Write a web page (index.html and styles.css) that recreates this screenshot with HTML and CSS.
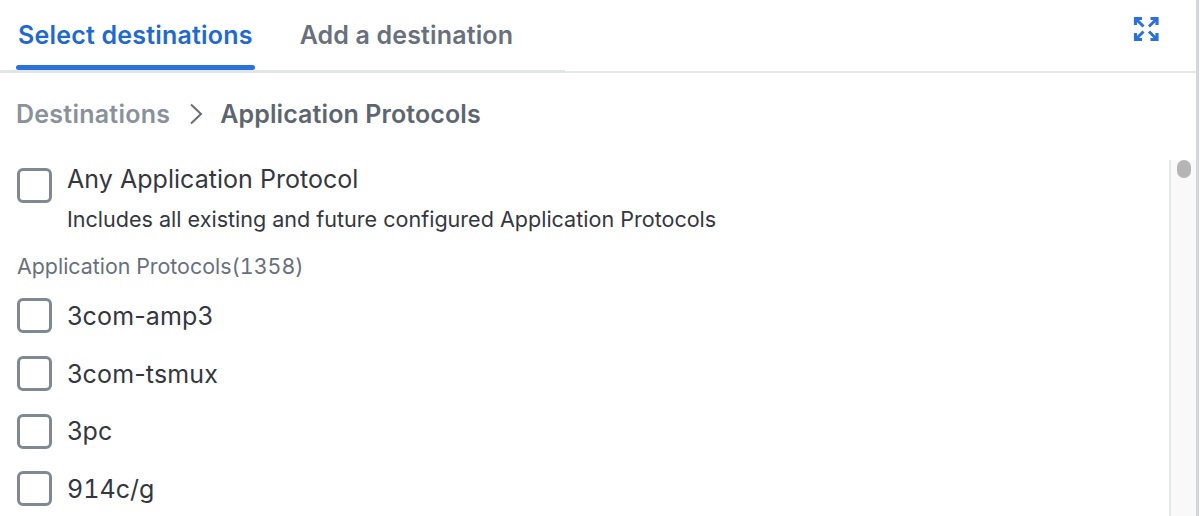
FILE: index.html
```html
<!DOCTYPE html>
<html lang="en">
<head>
<meta charset="utf-8">
<title>Select destinations</title>
<link rel="stylesheet" href="styles.css">
</head>
<body>
<div class="panel">
  <header class="header">
    <nav class="tabs">
      <span class="tab tab-active">Select destinations</span>
      <span class="tab">Add a destination</span>
    </nav>
    <button class="expand" aria-label="Expand">
      <svg width="26" height="26" viewBox="0 0 26 26" fill="none" stroke="#2a71d9">
        <path d="M2.5 9V2.5H9M24 9V2.5H17.500M2.500 17V23.500H9M24 17V23.500H17.500" stroke-width="3.200"/>
        <path d="M3 3l7.500 7.500M23.500 3L16 10.500M3 23l7.500-7.500M23.500 23L16 15.500" stroke-width="3"/>
      </svg>
    </button>
  </header>
  <div class="crumbs">
    <span class="crumb-link">Destinations</span>
    <svg class="crumb-sep" width="14" height="22" viewBox="0 0 14 22" fill="none"><path d="M2 1.500l10 9.500-10 9.500" stroke="#666e78" stroke-width="2"/></svg>
    <span class="crumb-current">Application Protocols</span>
  </div>
  <div class="body">
    <div class="list">
      <label class="row row-any">
        <span class="box"></span>
        <span class="any-text">
          <span class="label">Any Application Protocol</span>
          <span class="hint">Includes all existing and future configured Application Protocols</span>
        </span>
      </label>
      <div class="section tnum">Application Protocols(1358)</div>
      <label class="row"><span class="box"></span><span class="label label-wide">3com-amp3</span></label>
      <label class="row"><span class="box"></span><span class="label label-wide">3com-tsmux</span></label>
      <label class="row"><span class="box"></span><span class="label label-wide">3pc</span></label>
      <label class="row"><span class="box"></span><span class="label tnum">914c/g</span></label>
    </div>
    <div class="track"><div class="thumb"></div></div>
  </div>
</div>
</body>
</html>
```
FILE: styles.css
```css
* { box-sizing: border-box; }
html, body { margin: 0; height: 516px; overflow: hidden; background: #fff; }
body { font-family: Inter, "Liberation Sans", sans-serif; color: #343741; }
.tnum { font-variant-numeric: tabular-nums; }
.panel { width: 1199px; height: 516px; border-right: 3px solid #d3d6da; display: flex; flex-direction: column; overflow: hidden; }
.header { height: 73px; flex: none; display: flex; justify-content: space-between; border-bottom: 2px solid #e6e7ea; }
.tabs { width: 565px; height: 73px; padding-left: 16px; display: flex; gap: 43px; border-bottom: 3px solid #e3e4e8; flex: none; }
.tab { font-size: 25px; font-weight: 600; color: #69707d; height: 70px; padding: 19px 2px 0 2px; line-height: 32px; white-space: nowrap; letter-spacing: 0.15px; }
.tab-active { color: #1f6ad1; position: relative; letter-spacing: 0.2px; }
.tab-active::after { content: ""; position: absolute; left: 0; right: 0; bottom: 0; height: 5px; border-radius: 3px; background: #2a71d9; }
.expand { border: 0; background: none; padding: 0; margin: 16px 37px 0 0; width: 26px; height: 26px; }
.crumbs { flex: none; height: 84px; padding-left: 16px; display: flex; align-items: center; font-size: 25px; font-weight: 600; margin-top: -1px; }
.crumb-link { color: #8a919b; letter-spacing: 0.25px; }
.crumb-sep { margin: 0 17px 0 19px; }
.crumb-current { color: #5d6670; letter-spacing: 0.1px; }
.body { flex: 1; display: flex; min-height: 0; margin-top: 4px; }
.list { flex: 1; padding: 1px 0 0 17px; min-width: 0; }
.track { width: 27px; flex: none; background: #f9f9fa; border-left: 2px solid #e6e7ea; padding: 0 5px 0 6px; }
.thumb { width: 14px; height: 18px; background: #b5b5b5; border-radius: 7px; }
.row { display: flex; align-items: center; gap: 15px; height: 57.7px; }
.row-any { align-items: flex-start; height: 86px; }
.box { width: 35px; height: 35px; flex: none; border: 3px solid #808993; border-radius: 6px; background: #fff; }
.row-any .box { margin-top: 7px; }
.any-text { display: flex; flex-direction: column; }
.label { font-size: 25px; line-height: 36px; color: #343741; letter-spacing: 0.04px; }
.label-wide { letter-spacing: 0.15px; }
.hint { font-size: 21.55px; line-height: 28px; margin-top: 8px; color: #343741; }
.section { font-size: 21.4px; line-height: 28px; color: #69707d; margin: 5px 0 7px; }
```
